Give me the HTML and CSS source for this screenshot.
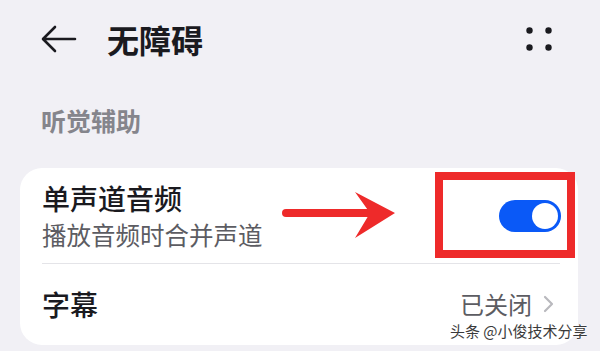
FILE: index.html
```html
<!DOCTYPE html>
<html lang="zh-CN">
<head>
<meta charset="utf-8">
<link rel="stylesheet" href="styles.css">
</head>
<body>
<div class="page">
  <header class="header">
    <svg class="back" width="36" height="28" viewBox="0 0 36 28">
      <path d="M34 14 H3 M14 2 L2 14 L14 26" fill="none" stroke="#1a1a1f" stroke-width="2.6" stroke-linecap="round" stroke-linejoin="round"/>
    </svg>
    <h1 class="title">无障碍</h1>
    <svg class="more" width="26" height="24" viewBox="0 0 26 24">
      <circle cx="3.5" cy="3.5" r="3.2" fill="#1a1a1f"/>
      <circle cx="22.5" cy="3.5" r="3.2" fill="#1a1a1f"/>
      <circle cx="3.5" cy="20.5" r="3.2" fill="#1a1a1f"/>
      <circle cx="22.5" cy="20.5" r="3.2" fill="#1a1a1f"/>
    </svg>
  </header>
  <div class="section-title">听觉辅助</div>
  <div class="card">
    <div class="row row-mono">
      <div class="row-text">
        <div class="row-title">单声道音频</div>
        <div class="row-sub">播放音频时合并声道</div>
      </div>
      <div class="toggle"><span class="knob"></span></div>
    </div>
    <div class="divider"></div>
    <div class="row row-sub-item">
      <div class="row-title">字幕</div>
      <div class="row-value">已关闭
        <svg class="chev" width="12" height="18" viewBox="0 0 12 18"><path d="M2 2 L9 9 L2 16" fill="none" stroke="#b9b9be" stroke-width="2.2" stroke-linecap="round" stroke-linejoin="round"/></svg>
      </div>
    </div>
  </div>
  <div class="mark-box"></div>
  <svg class="mark-arrow" width="120" height="50" viewBox="0 0 120 50">
    <path d="M4 21 L92 21" stroke="#ee2a2a" stroke-width="8" stroke-linecap="round"/>
    <polygon points="113,21 73,0 88,21 73,46" fill="#ee2a2a"/>
  </svg>
  <div class="watermark">头条 @小俊技术分享</div>
</div>
</body>
</html>
```
FILE: styles.css
```css
* { box-sizing: border-box; margin: 0; padding: 0; }
html, body { width: 600px; height: 351px; overflow: hidden; }
body {
  background: #f1f0f5;
  font-family: "Noto Sans CJK SC", "Noto Sans", sans-serif;
  color: #1a1a1f;
}
.page { position: relative; width: 600px; height: 351px; overflow: hidden; }
.header {
  display: flex;
  align-items: center;
  height: 78px;
  padding: 0 48px 0 41px;
}
.back { flex: none; }
.title {
  flex: 1;
  margin-left: 30px;
  font-size: 32px;
  font-weight: 700;
  line-height: 40px;
}
.more { flex: none; }
.section-title {
  margin-top: 26px;
  padding-left: 41px;
  font-size: 25px;
  font-weight: 700;
  line-height: 32px;
  color: #85858c;
}
.card {
  margin: 32px 22px 0 20px;
  background: #ffffff;
  border-radius: 22px;
  height: 177px;
}
.row {
  display: flex;
  align-items: center;
  justify-content: space-between;
  padding: 0 17px 0 22px;
}
.row-mono { height: 95px; }
.row-text { display: flex; flex-direction: column; gap: 5px; }
.row-title { font-size: 28px; font-weight: 500; line-height: 34px; }
.row-sub { font-size: 24.5px; line-height: 30px; color: #5c5c62; }
.toggle {
  width: 62px;
  height: 32px;
  border-radius: 16px;
  background: #0a59f7;
  display: flex;
  align-items: center;
  justify-content: flex-end;
  padding-right: 3px;
}
.knob { width: 26px; height: 26px; border-radius: 50%; background: #fff; }
.divider { height: 1px; background: #e4e4e8; margin: 0 18px 0 22px; }
.row-sub-item { height: 80px; padding-right: 23px; }
.row-value {
  display: flex;
  align-items: center;
  gap: 11px;
  font-size: 24px;
  line-height: 30px;
  color: #5c5c62;
}
.mark-box {
  position: absolute;
  left: 435px;
  top: 172px;
  width: 140px;
  height: 86px;
  border: 8px solid #ee2a2a;
}
.mark-arrow { position: absolute; left: 282px; top: 192px; }
.watermark {
  position: absolute;
  left: 450px;
  top: 321px;
  font-size: 15px;
  line-height: 20px;
  color: #3a3a3a;
  text-shadow: 0 0 2px #fff, 0 0 2px #fff, 0 0 1px #fff;
}
```
